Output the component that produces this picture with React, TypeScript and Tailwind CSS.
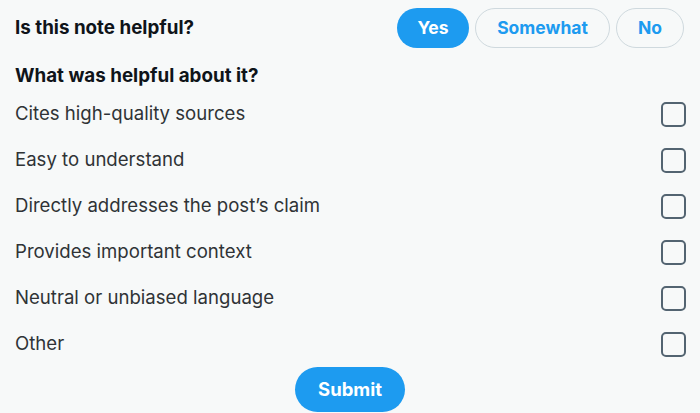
import React from "react";

const items = [
  "Cites high-quality sources",
  "Easy to understand",
  "Directly addresses the post’s claim",
  "Provides important context",
  "Neutral or unbiased language",
  "Other",
];

export default function App() {
  return (
    <div
      className="w-[700px] h-[413px] bg-[#f7f9f9] text-[#0f1419] overflow-hidden"
      style={{ fontFamily: "Inter, 'Noto Sans', sans-serif" }}
    >
      <div className="flex items-center justify-between pl-[15px] pr-[16px] pt-[8px]">
        <div className="text-[18.8px] font-bold">Is this note helpful?</div>
        <div className="flex gap-[6px]">
          <button className="h-[40px] w-[72px] rounded-full bg-[#1d9bf0] text-white text-[17.5px] font-bold">
            Yes
          </button>
          <button className="h-[40px] w-[135px] rounded-full border border-[#cfd9de] text-[#1d9bf0] text-[17.5px] font-bold">
            Somewhat
          </button>
          <button className="h-[40px] w-[68px] rounded-full border border-[#cfd9de] text-[#1d9bf0] text-[17.5px] font-bold">
            No
          </button>
        </div>
      </div>
      <div className="pl-[15px] pt-[16px] text-[18.8px] font-bold leading-[24px]">
        What was helpful about it?
      </div>
      <div className="flex flex-col pl-[15px] pr-[14px] pt-[3px]">
        {items.map((t) => (
          <div key={t} className="flex items-center justify-between h-[46px]">
            <span className="text-[18.6px] text-[#2f3336]">{t}</span>
            <span className="w-[25px] h-[25px] rounded-[5px] border-2 border-[#536471]" />
          </div>
        ))}
      </div>
      <div className="flex justify-center">
        <button className="h-[45px] w-[110px] rounded-full bg-[#1d9bf0] text-white text-[18.5px] font-bold">
          Submit
        </button>
      </div>
    </div>
  );
}
